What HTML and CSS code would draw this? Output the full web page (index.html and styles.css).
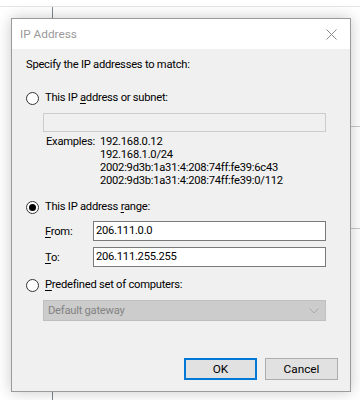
FILE: index.html
```html
<!DOCTYPE html>
<html lang="en">
<head>
    <meta charset="UTF-8">
    <meta name="viewport" content="width=device-width, initial-scale=1.0">
    <title>IP Address</title>
    <link rel="stylesheet" href="styles.css">
</head>
<body>
    <!-- Window behind the dialog -->
    <div class="backWindow">
        <div class="backTop"></div>
        <div class="backMain">
            <div class="backSide"></div>
            <div class="backRows">
                <div class="backRow first"></div>
                <div class="backRow second"></div>
            </div>
        </div>
    </div>

    <div class="dialog">
        <div class="titleBar">
            <span class="titleText">IP Address</span>
            <svg class="closeIcon" width="11" height="11" viewBox="0 0 11 11">
                <path d="M0.5 0.5 L10.5 10.5 M10.5 0.5 L0.5 10.5" stroke="#8a8a8a" stroke-width="1" fill="none"/>
            </svg>
        </div>

        <div class="dialogBody">
            <p class="intro">Specify the IP addresses to match:</p>

            <div class="option optionFirst">
                <span class="radio"></span>
                <span>This IP <u>a</u>ddress or subnet:</span>
            </div>
            <div class="textBox disabled wide"></div>

            <div class="examples">
                <span class="examplesLabel">Examples:</span>
                <div class="examplesList">
                    <div>192.168.0.12</div>
                    <div>192.168.1.0/24</div>
                    <div>2002:9d3b:1a31:4:208:74ff:fe39:6c43</div>
                    <div>2002:9d3b:1a31:4:208:74ff:fe39:0/112</div>
                </div>
            </div>

            <div class="option optionRange">
                <span class="radio checked"></span>
                <span>This IP address <u>r</u>ange:</span>
            </div>
            <div class="rangeRow">
                <span class="rangeLabel"><u>F</u>rom:</span>
                <div class="textBox">206.111.0.0</div>
            </div>
            <div class="rangeRow">
                <span class="rangeLabel"><u>T</u>o:</span>
                <div class="textBox">206.111.255.255</div>
            </div>

            <div class="option">
                <span class="radio"></span>
                <span><u>P</u>redefined set of computers:</span>
            </div>
            <div class="selectBox">
                <span>Default gateway</span>
                <svg width="10" height="6" viewBox="0 0 10 6">
                    <path d="M0.5 0.5 L5 5 L9.5 0.5" stroke="#a8a8a8" stroke-width="1" fill="none"/>
                </svg>
            </div>
        </div>

        <div class="buttonRow">
            <button class="dlgButton default">OK</button>
            <button class="dlgButton">Cancel</button>
        </div>
    </div>
</body>
</html>
```

FILE: styles.css
```css
/* Page as a Windows 10 desktop snippet */
body {
    margin: 0;
    width: 360px;
    height: 400px;
    overflow: hidden;
    position: relative;
    background-color: #ffffff;
    font-family: Roboto, "Liberation Sans", sans-serif;
    font-size: 11.2px;
    letter-spacing: -0.25px;
    color: #000000;
}

/* Window behind the dialog */
.backWindow {
    height: 400px;
    display: flex;
    flex-direction: column;
}

.backTop {
    height: 6px;
    border-bottom: 1px solid #e6e6e6;
}

.backMain {
    flex: 1;
    display: flex;
}

.backSide {
    width: 52px;
    border-right: 1px solid #7d8593;
}

.backRows {
    flex: 1;
}

.backRow {
    border-bottom: 1px solid #c8c8c8;
}

.backRow.first {
    height: 119px;
}

.backRow.second {
    height: 101px;
}

/* The dialog sits on top of the back window */
.dialog {
    position: absolute;
    left: 11px;
    top: 18px;
    width: 338px;
    height: 372px;
    border: 1px solid #9a9a9a;
    background-color: #f0f0f0;
    box-shadow: 0 0 14px rgba(0, 0, 0, 0.22);
    display: flex;
    flex-direction: column;
}

.titleBar {
    height: 30px;
    background-color: #ffffff;
    display: flex;
    align-items: center;
    justify-content: space-between;
    padding: 0 13px 0 8px;
}

.titleText {
    color: #999999;
    font-size: 11.8px;
    letter-spacing: 0;
}

.dialogBody {
    flex: 1;
    padding: 0 0 0 14px;
}

.intro {
    margin: 8px 0 0 0;
    line-height: 16px;
}

.option {
    display: flex;
    align-items: center;
    gap: 6px;
    height: 16px;
    line-height: 16px;
    margin-top: 10px;
}

.option.optionFirst {
    margin-top: 17px;
}

.option.optionRange {
    margin-top: 12px;
}

.radio {
    width: 11px;
    height: 11px;
    border: 1px solid #333333;
    border-radius: 50%;
    background-color: #ffffff;
    display: flex;
    align-items: center;
    justify-content: center;
}

.radio.checked::after {
    content: "";
    width: 7px;
    height: 7px;
    border-radius: 50%;
    background-color: #000000;
}

u {
    text-decoration-thickness: 1px;
    text-underline-offset: 2px;
}

.textBox {
    flex: 1;
    height: 18px;
    line-height: 18px;
    border: 1px solid #7a7a7a;
    background-color: #ffffff;
    padding-left: 2px;
    margin-right: 24px;
}

.textBox.disabled {
    border-color: #cccccc;
    background-color: #f0f0f0;
}

.textBox.wide {
    margin: 7px 24px 0 17px;
    height: 17px;
}

.examples {
    display: flex;
    margin: 3px 0 0 20px;
    line-height: 13px;
}

.examplesLabel {
    width: 54px;
}

.rangeRow {
    display: flex;
    align-items: center;
    margin: 6px 0 0 19px;
}

.rangeLabel {
    width: 48px;
}

.selectBox {
    height: 19px;
    margin: 7px 24px 0 17px;
    border: 1px solid #bfbfbf;
    background-color: #cccccc;
    color: #838383;
    display: flex;
    align-items: center;
    justify-content: space-between;
    padding: 0 6px 0 4px;
}

.buttonRow {
    display: flex;
    justify-content: flex-end;
    gap: 8px;
    padding: 0 12px 11px 0;
}

.dlgButton {
    width: 73px;
    height: 22px;
    font-family: inherit;
    font-size: 11.8px;
    letter-spacing: 0;
    color: #000000;
    background-color: #e1e1e1;
    border: 1px solid #adadad;
    padding: 0;
}

.dlgButton.default {
    border: 2px solid #0078d7;
}
```
